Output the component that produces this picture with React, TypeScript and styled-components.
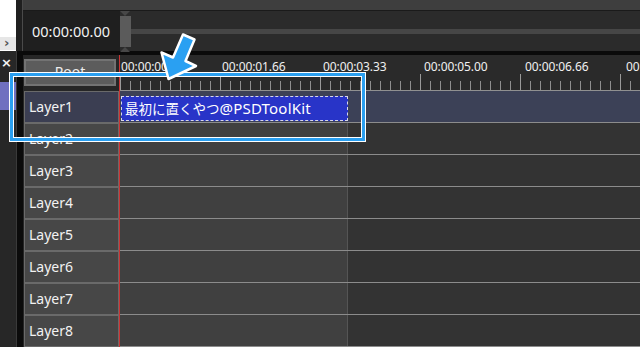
import React from 'react';
import styled, { createGlobalStyle } from 'styled-components';

const GlobalStyle = createGlobalStyle`
  html, body {
    margin: 0;
    padding: 0;
    background: #1e1e1e;
  }
  body {
    font-family: 'Noto Sans', 'Noto Sans CJK JP', sans-serif;
  }
`;

const layers = ['Layer1', 'Layer2', 'Layer3', 'Layer4', 'Layer5', 'Layer6', 'Layer7', 'Layer8'];
const rulerLabels = ['00:00:00.00', '00:00:01.66', '00:00:03.33', '00:00:05.00', '00:00:06.66', '00:00:08.33'];

const Page = styled.div`
  position: relative;
  display: flex;
  width: 640px;
  height: 347px;
  overflow: hidden;
  background: #1e1e1e;
`;

// far left strip (scene list)
const SideColumn = styled.div`
  display: flex;
  flex-direction: column;
  width: 16px;
  flex-shrink: 0;
`;
const SideTop = styled.div`
  height: 51px;
  display: flex;
  flex-direction: column;
  justify-content: flex-end;
  background: #ffffff;
`;
const ScrollButton = styled.div`
  height: 13px;
  margin-bottom: 1px;
  background: #e6e6e6;
  color: #555555;
  font-family: 'DejaVu Sans', sans-serif;
  font-weight: bold;
  font-size: 13px;
  line-height: 12px;
  padding-left: 4px;
`;
const SideBottom = styled.div`
  flex: 1;
  display: flex;
  flex-direction: column;
  background: #272727;
`;
const CloseMark = styled.div`
  margin-top: 3px;
  height: 20px;
  padding-left: 1px;
  color: #f4f4f4;
  font-family: 'DejaVu Sans', sans-serif;
  font-weight: bold;
  font-size: 13px;
  line-height: 18px;
`;
const SceneSwatch = styled.div`
  margin-top: 8px;
  width: 16px;
  height: 28px;
  background: #7070c0;
`;

const Splitter = styled.div`
  display: flex;
  flex-direction: column;
  width: 7px;
  flex-shrink: 0;
`;
const SplitterTop = styled.div`
  height: 51px;
  background: #1f1f1f;
  border-right: 1px solid #4a4a4a;
  box-sizing: border-box;
`;
const SplitterBottom = styled.div`
  flex: 1;
  background: #0b0b0b;
  border-left: 1px solid #3a3a3a;
`;

const Main = styled.div`
  flex: 1;
  display: flex;
  flex-direction: column;
  min-width: 0;
`;

const TopBar = styled.div`
  display: flex;
  flex-direction: column;
  height: 51px;
`;
const Band = styled.div`
  height: 10px;
  background: #3e3e3e;
  border-bottom: 1px solid #1a1a1a;
`;
const TopRow = styled.div`
  flex: 1;
  display: flex;
`;
const TimeBox = styled.div`
  width: 97px;
  flex-shrink: 0;
  background: #1f1f1f;
  color: #f2f2f2;
  font-size: 14.5px;
  line-height: 40px;
  padding-left: 9px;
  box-sizing: border-box;
  white-space: nowrap;
`;
const SliderArea = styled.div`
  flex: 1;
  display: flex;
  align-items: center;
  background: #2b2b2b;
`;
const Knob = styled.div`
  position: relative;
  width: 11px;
  height: 31px;
  background: #5b5b5b;
  &::before,
  &::after {
    content: '';
    position: absolute;
    left: 0;
    border-left: 5.5px solid transparent;
    border-right: 5.5px solid transparent;
  }
  &::before {
    top: -5px;
    border-top: 5px solid #474747;
  }
  &::after {
    bottom: -5px;
    border-bottom: 5px solid #474747;
  }
`;
const Track = styled.div`
  flex: 1;
  height: 5px;
  background: #464646;
`;

const BlackBand = styled.div`
  height: 4px;
  background: #0a0a0a;
`;

const Timeline = styled.div`
  flex: 1;
  display: flex;
  min-height: 0;
`;

const HeaderColumn = styled.div`
  width: 96px;
  flex-shrink: 0;
  display: flex;
  flex-direction: column;
  background: #262626;
`;
const RootArea = styled.div`
  height: 36px;
  padding: 4px 3px 0 1px;
  box-sizing: border-box;
`;
const RootButton = styled.div`
  height: 27px;
  background: #5c5c5c;
  border: 2px solid #737373;
  box-sizing: border-box;
  color: #eeeeee;
  font-size: 14px;
  line-height: 22px;
  text-align: center;
`;
const HeaderCell = styled.div<{ $selected?: boolean }>`
  height: 32px;
  margin-left: 1px;
  border: 1px solid #6a6a6a;
  box-sizing: border-box;
  background: ${(p) => (p.$selected ? '#3b3e52' : '#474747')};
  color: #f2f2f2;
  font-size: 14px;
  line-height: 29px;
  padding-left: 4px;
`;

const TrackColumn = styled.div`
  flex: 1;
  display: flex;
  flex-direction: column;
  border-left: 1px solid #cc3333;
  min-width: 0;
`;
const Ruler = styled.div`
  height: 36px;
  box-sizing: border-box;
  display: flex;
  overflow: hidden;
  padding-top: 5px;
  background-color: #2a2a2a;
  border-bottom: 1px solid #909090;
  background-image: repeating-linear-gradient(to right, #9a9a9a 0 1px, transparent 1px 100px),
    repeating-linear-gradient(to right, #8e8e8e 0 1px, transparent 1px 10px);
  background-size: 100% 16px, 100% 9px;
  background-position: 0 100%, 0 100%;
  background-repeat: no-repeat;
`;
const RulerLabel = styled.div`
  width: 100px;
  flex-shrink: 0;
  padding-left: 1px;
  color: #f0f0f0;
  font-size: 12px;
  line-height: 14px;
  letter-spacing: -0.1px;
  white-space: nowrap;
`;
const TrackRow = styled.div<{ $selected?: boolean }>`
  height: 32px;
  box-sizing: border-box;
  display: flex;
  padding: 5px 0 1px 1px;
  border-bottom: 1px solid #8c8c8c;
  background: ${(p) =>
    p.$selected
      ? '#3c4157'
      : 'linear-gradient(to right, #404040 227px, #555555 227px, #555555 228px, #333333 228px)'};
`;
const Clip = styled.div`
  width: 227px;
  box-sizing: border-box;
  background: #2834c8;
  border: 1px dashed #d8d8e8;
  color: #ffffff;
  font-size: 13.5px;
  line-height: 22px;
  padding-left: 3px;
  white-space: nowrap;
  overflow: hidden;
`;
const ClipLatin = styled.span`
  font-size: 15px;
  letter-spacing: 0.2px;
`;

// callout overlays drawn over the screenshot
const Highlight = styled.div`
  position: absolute;
  left: 10px;
  top: 73px;
  width: 355px;
  height: 68px;
  box-sizing: border-box;
  border: 3px solid #2a9ff0;
  box-shadow: 0 0 0 1px #ffffff, inset 0 0 0 1px #ffffff;
  pointer-events: none;
`;
const ArrowLayer = styled.svg`
  position: absolute;
  left: 0;
  top: 0;
  pointer-events: none;
`;

const App = () => {
  return (
    <Page>
      <GlobalStyle />
      <SideColumn>
        <SideTop>
          <ScrollButton>›</ScrollButton>
        </SideTop>
        <SideBottom>
          <CloseMark>×</CloseMark>
          <SceneSwatch />
        </SideBottom>
      </SideColumn>
      <Splitter>
        <SplitterTop />
        <SplitterBottom />
      </Splitter>
      <Main>
        <TopBar>
          <Band />
          <TopRow>
            <TimeBox>00:00:00.00</TimeBox>
            <SliderArea>
              <Knob />
              <Track />
            </SliderArea>
          </TopRow>
        </TopBar>
        <BlackBand />
        <Timeline>
          <HeaderColumn>
            <RootArea>
              <RootButton>Root</RootButton>
            </RootArea>
            {layers.map((name, i) => (
              <HeaderCell key={name} $selected={i === 0}>
                {name}
              </HeaderCell>
            ))}
          </HeaderColumn>
          <TrackColumn>
            <Ruler>
              {rulerLabels.map((t) => (
                <RulerLabel key={t}>{t}</RulerLabel>
              ))}
            </Ruler>
            {layers.map((name, i) => (
              <TrackRow key={name} $selected={i === 0}>
                {i === 0 && (
                  <Clip>
                    最初に置くやつ<ClipLatin>@PSDToolKit</ClipLatin>
                  </Clip>
                )}
              </TrackRow>
            ))}
          </TrackColumn>
        </Timeline>
      </Main>
      <Highlight />
      <ArrowLayer width={640} height={347} viewBox="0 0 640 347">
        <polygon
          points="183,34.5 194.5,39.5 185.5,61 196,66 168.5,79 161.5,52.5 173,57.5"
          fill="#2aa0f2"
          stroke="#ffffff"
          strokeWidth={2.5}
          strokeLinejoin="round"
        />
      </ArrowLayer>
    </Page>
  );
};

export default App;
